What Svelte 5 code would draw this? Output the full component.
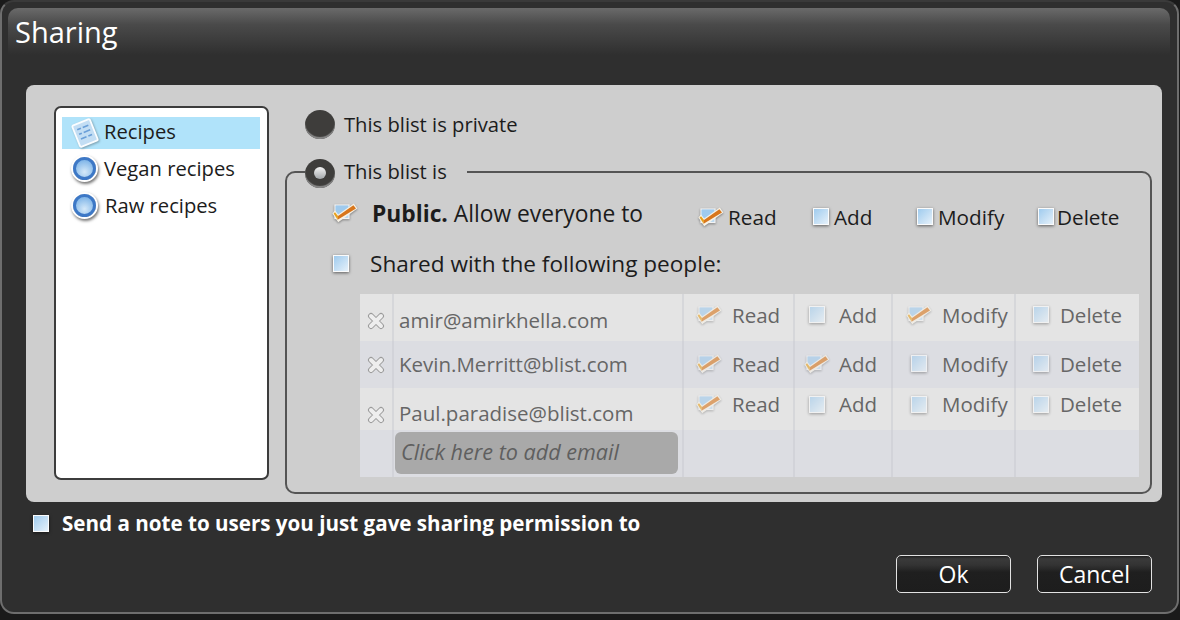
<script lang="ts">
	type Perm = { name: string; on: boolean };
	type Person = { email: string; perms: boolean[]; cls: string };

	const PERM_NAMES = ['Read', 'Add', 'Modify', 'Delete'];

	const publicPerms: Perm[] = [
		{ name: 'Read', on: true },
		{ name: 'Add', on: false },
		{ name: 'Modify', on: false },
		{ name: 'Delete', on: false }
	];

	const people: Person[] = [
		{ email: 'amir@amirkhella.com', perms: [true, false, true, false], cls: 'first' },
		{ email: 'Kevin.Merritt@blist.com', perms: [true, true, false, false], cls: 'second' },
		{ email: 'Paul.paradise@blist.com', perms: [true, false, false, false], cls: 'third' }
	];
</script>

{#snippet check(on: boolean)}
	{#if on}
		<svg class="tick" width="26" height="20" viewBox="0 0 26 20">
			<rect x="3" y="2" width="14" height="13.5" fill="#b9d9f2" stroke="#f4f4f4" stroke-width="1.2" />
			<path d="M3.6 2.6H16.4V7L6 13.5L3.6 11Z" fill="#9fcaed" />
			<path d="M0.4 10.4L3 7.6L6.2 11.4L21.8 0.6L25.4 5.4L6.2 19.2Z" fill="#f7f2e6" />
			<path d="M1.6 10.6L3 9.2L6 13L5.6 16.8Z" fill="#e8a11d" />
			<path d="M6 13L21.4 2.2L24 5.4L5.6 16.8Z" fill="#d8761c" />
		</svg>
	{:else}
		<span class="box"></span>
	{/if}
{/snippet}

{#snippet ball()}
	<span class="ball"></span>
{/snippet}

<div class="dialog">
	<header class="title">Sharing</header>

	<section class="panel">
		<ul class="list">
			<li class="selected">
				<span class="icon">
					<svg class="page" width="30" height="32" viewBox="0 0 30 32">
						<g transform="rotate(-22 15 16)">
							<rect x="5.5" y="4.5" width="19" height="23" rx="1.5" fill="#c3def4" stroke="#fbfdff" stroke-width="1.8" />
							<path d="M9 10h4M15 10h6M9 15h3M14 15h7M9 20h6M17 20h4" stroke="#6a9fd8" stroke-width="1.6" fill="none" />
						</g>
					</svg>
				</span>
				<span class="label">Recipes</span>
			</li>
			<li class="lifted"><span class="icon">{@render ball()}</span>Vegan recipes</li>
			<li class="lifted"><span class="icon">{@render ball()}</span><span class="nudge">Raw recipes</span></li>
		</ul>

		<div class="options">
			<div class="choice"><span class="radio"></span>This blist is private</div>

			<fieldset>
				<legend><span class="radio on"></span>This blist is</legend>

				<div class="public">
					<span class="lead">{@render check(true)}</span>
					<span class="public-text"><b>Public.</b> Allow everyone to</span>
					<div class="public-perms">
						{#each publicPerms as p}
							<span class="perm {p.name.toLowerCase()}">{@render check(p.on)}{p.name}</span>
						{/each}
					</div>
				</div>

				<div class="shared">
					<span class="lead">{@render check(false)}</span>
					Shared with the following people:
				</div>

				<div class="people">
					{#each people as person}
						<div class="row {person.cls}">
							<span class="cell remove">
								<svg width="18" height="18" viewBox="0 0 18 18">
									<path d="M4 4L14 14M14 4L4 14" stroke="#9b9b9b" stroke-width="6" stroke-linecap="round" />
									<path d="M4 4L14 14M14 4L4 14" stroke="#eeeeee" stroke-width="4" stroke-linecap="round" />
								</svg>
							</span>
							<span class="cell email">{person.email}</span>
							{#each PERM_NAMES as name, i}
								<span class="cell grant {name.toLowerCase()}">
									<span class="slot">{@render check(person.perms[i])}</span>{name}
								</span>
							{/each}
						</div>
					{/each}
					<div class="row add">
						<span class="cell remove"></span>
						<span class="cell email"><span class="add-input">Click here to add email</span></span>
						{#each PERM_NAMES as name}
							<span class="cell grant {name.toLowerCase()}"></span>
						{/each}
					</div>
				</div>
			</fieldset>
		</div>
	</section>

	<div class="note">{@render check(false)}<span>Send a note to users you just gave sharing permission to</span></div>

	<footer class="actions">
		<button>Ok</button>
		<button>Cancel</button>
	</footer>
</div>

<style>
	:global(body) {
		margin: 0;
		background: #1a1a1a;
	}

	.dialog {
		box-sizing: border-box;
		width: 1179px;
		height: 614px;
		padding: 6px 6px 0;
		background: #2f2f2f;
		border: 2px solid #6e6e6e;
		border-top-color: #3a3a3a;
		border-radius: 14px;
		font-family: 'Open Sans', sans-serif;
		font-size: 20px;
		color: #1c1c1c;
	}

	.title {
		box-sizing: border-box;
		height: 47px;
		width: 1162px;
		padding: 4px 0 0 7px;
		border-radius: 10px 10px 0 0;
		background: linear-gradient(#6a6a6a, #4a4a4a 35%, #2f2f2f);
		color: #fff;
		font-size: 29px;
		line-height: 40px;
	}

	.panel {
		box-sizing: border-box;
		display: flex;
		width: 1136px;
		height: 417px;
		margin: 30px 0 0 18px;
		padding: 21px 11px 0 28px;
		background: #cecece;
		border-radius: 8px;
	}

	.list {
		box-sizing: border-box;
		flex: none;
		width: 215px;
		height: 374px;
		margin: 0;
		padding: 9px 7px 8px 6px;
		list-style: none;
		background: #fff;
		border: 2px solid #3c3c3c;
		border-radius: 7px;
		font-size: 20.2px;
	}

	.list li {
		box-sizing: border-box;
		display: flex;
		align-items: center;
		height: 32px;
		margin-bottom: 5px;
		line-height: 28px;
	}

	.list li.lifted {
		padding-bottom: 4px;
	}

	.list li.selected {
		background: #b0e3fa;
	}

	.label {
		margin-top: -4px;
	}

	.page {
		filter: drop-shadow(1px 1px 1px rgba(0, 0, 0, 0.3));
	}

	.icon {
		display: flex;
		justify-content: center;
		flex: none;
		width: 42px;
		padding-left: 3px;
		box-sizing: border-box;
	}

	.nudge {
		margin-left: 1px;
	}

	.ball {
		box-sizing: border-box;
		width: 23px;
		height: 23px;
		border-radius: 50%;
		border: 3px solid #3d78c6;
		background: radial-gradient(circle at 50% 70%, #d5e9f9, #86b9e9 75%);
		box-shadow: 0 0 0 2px #fff, 1px 2px 3px 2px #777;
	}

	.options {
		flex: 1;
		margin-left: 16px;
		font-size: 20.2px;
	}

	.choice {
		display: flex;
		align-items: center;
		gap: 9px;
		height: 34px;
		margin: 1px 0 0 20px;
	}

	.radio {
		box-sizing: border-box;
		flex: none;
		width: 30px;
		height: 29px;
		border-radius: 50%;
		background: #3e3d3b;
		box-shadow: inset 0 -2px 1px #8a8a8a;
	}

	.radio.on {
		display: inline-flex;
		align-items: center;
		justify-content: center;
		vertical-align: middle;
		margin: -1px 9px 0 0;
	}

	.radio.on::after {
		content: '';
		width: 12px;
		height: 12px;
		border-radius: 50%;
		background: linear-gradient(#f4f4f4, #a3a7aa);
	}

	fieldset {
		box-sizing: border-box;
		width: 866px;
		height: 337px;
		margin: 16px 0 0;
		padding: 0 11px 0 45px;
		border: 2px solid #555;
		border-radius: 10px;
	}

	legend {
		margin-left: -27px;
		padding: 0 20px 0 0;
		height: 30px;
		line-height: 28px;
		white-space: nowrap;
	}

	.public,
	.shared {
		display: flex;
		align-items: center;
	}

	.public {
		height: 30px;
		margin-top: 11px;
	}

	.lead {
		display: flex;
		flex: none;
		width: 40px;
		padding-left: 1px;
		box-sizing: border-box;
	}

	.public .lead {
		padding-left: 0;
	}

	.public-text {
		font-size: 22.8px;
	}

	.public-perms {
		display: flex;
		margin-left: 55px;
		padding-top: 7px;
		font-size: 20.7px;
	}

	.perm {
		display: flex;
		align-items: center;
		gap: 5px;
	}

	.perm.read { width: 115px; }
	.perm.add { width: 104px; gap: 5px; }
	.perm.modify { width: 121px; gap: 5px; }
	.perm.delete { gap: 3px; }

	.perm .tick {
		margin-right: -1px;
	}

	.tick {
		filter: drop-shadow(0 1px 1px rgba(0, 0, 0, 0.4));
	}

	.shared {
		height: 34px;
		margin-top: 18px;
		font-size: 22.6px;
	}

	.shared .lead {
		width: 38px;
	}

	.people {
		width: 779px;
		margin: 14px 0 0 28px;
		font-size: 20.5px;
	}

	.row {
		display: grid;
		grid-template-columns: 34px 290px 111px 98px 123px 123px;
		background: #e4e4e4;
		color: #666;
		height: 47px;
	}

	.row.second,
	.row.add {
		background: #dcdde2;
	}

	.row.third {
		height: 42px;
	}

	.cell {
		display: flex;
		align-items: center;
		box-sizing: border-box;
		border-right: 2px solid rgba(200, 202, 208, 0.5);
	}

	.cell:last-child {
		border-right: 0;
	}

	.remove {
		justify-content: center;
		padding-top: 7px;
	}

	.email {
		padding: 4px 0 0 5px;
	}

	.row.second .email {
		padding: 0 0 2px 5px;
	}

	.row.second .remove {
		padding-top: 0;
	}

	.row.third .email {
		padding-top: 8px;
	}

	.row.third .remove {
		padding-top: 12px;
	}

	.grant {
		padding-bottom: 3px;
	}

	.row.first .grant {
		padding-bottom: 6px;
	}

	.row.second .grant {
		padding-bottom: 2px;
	}

	.row.third .grant {
		padding-bottom: 10px;
	}

	.slot {
		display: flex;
		align-items: center;
		justify-content: center;
		flex: none;
		opacity: 0.6;
	}

	.grant.read { padding-left: 12px; }
	.grant.add { padding-left: 7px; }
	.grant.modify { padding-left: 13px; }
	.grant.delete { padding-left: 14px; }

	.grant .slot { margin-right: 10px; width: 26px; }
	.grant.add .slot { width: 30px; margin-right: 7px; }
	.grant.delete .slot { width: 22px; margin-right: 8px; }

	.row.add .email {
		padding: 2px 4px 3px 1px;
		align-items: stretch;
	}

	.add-input {
		flex: 1;
		display: flex;
		align-items: center;
		padding: 0 0 3px 6px;
		background: #a9a9a9;
		border-radius: 6px;
		font-style: italic;
		font-size: 21.6px;
		color: #5f5f5f;
	}

	.box {
		display: inline-block;
		box-sizing: border-box;
		flex: none;
		width: 16px;
		height: 17px;
		border: 1.5px solid #fbfbfb;
		background: linear-gradient(135deg, #9fcbee, #e6f1fa);
		box-shadow: 0 1px 3px rgba(0, 0, 0, 0.55);
	}

	.note {
		display: flex;
		align-items: center;
		gap: 13px;
		height: 30px;
		margin: 6px 0 0 25px;
		color: #fff;
		font-weight: 700;
		font-size: 20.6px;
	}

	.actions {
		display: flex;
		justify-content: flex-end;
		gap: 26px;
		width: 1144px;
		margin-top: 17px;
	}

	button {
		width: 115px;
		height: 38px;
		padding: 0;
		border: 1px solid #e2e2e2;
		border-radius: 5px;
		background: linear-gradient(#1f1f1f, #3a3a3a 8%, #333 25%, #1f1f1f 45%, #1d1d1d);
		color: #fff;
		font: 23px 'Open Sans', sans-serif;
	}
</style>
